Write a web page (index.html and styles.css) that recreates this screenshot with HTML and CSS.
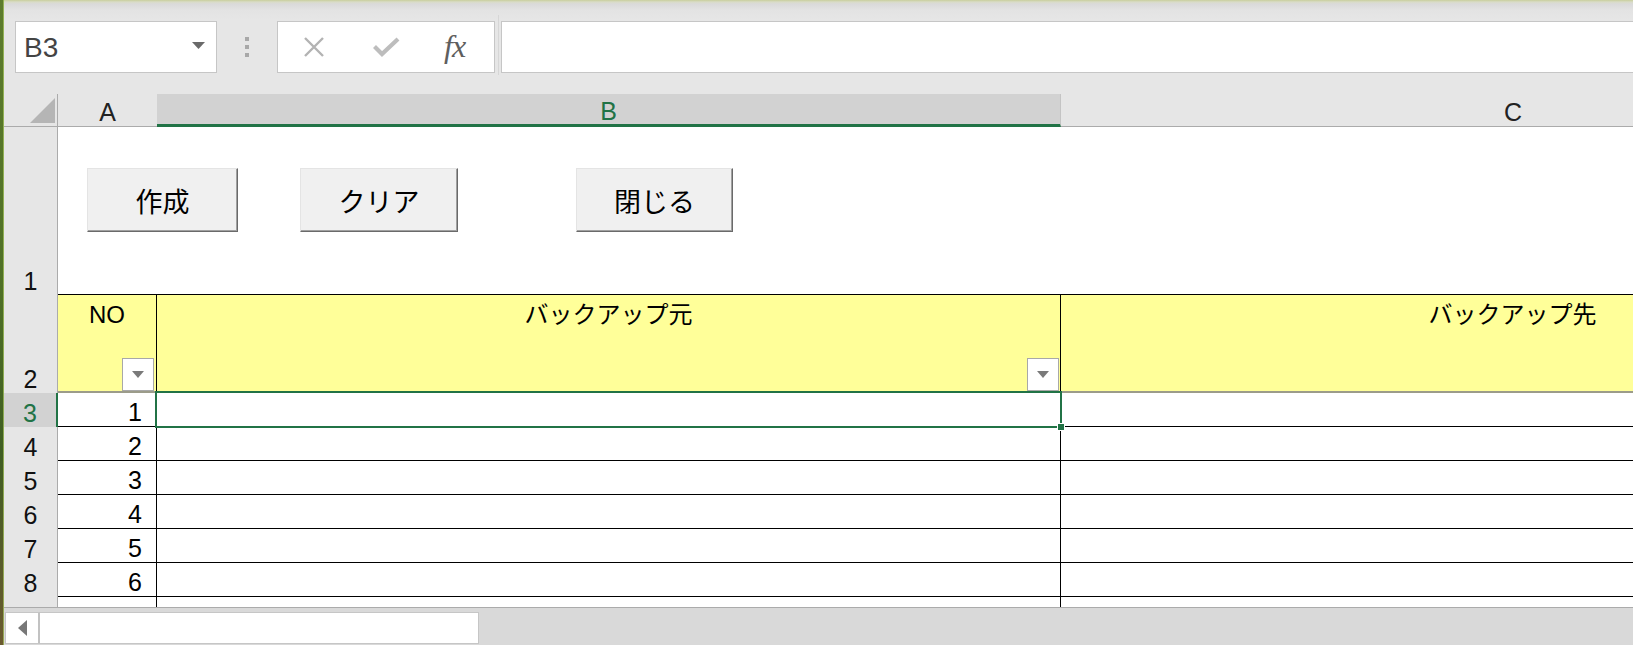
FILE: index.html
```html
<!DOCTYPE html>
<html lang="ja">
<head>
<meta charset="utf-8">
<title>Excel</title>
<link rel="stylesheet" href="styles.css">
</head>
<body>
<div class="screen">
  <div class="desk"></div>
  <div class="excel">
    <div class="fbar">
      <div class="namebox">
        <span class="nb-text">B3</span>
        <svg class="nb-arrow" width="13" height="7" viewBox="0 0 13 7"><polygon points="0,0 13,0 6.5,7" fill="#6a6a6a"/></svg>
      </div>
      <div class="grip">
        <span class="dot"></span><span class="dot"></span><span class="dot"></span>
      </div>
      <div class="fbtns">
        <svg class="ico-x" width="22" height="20" viewBox="0 0 22 20"><path d="M2 1 L20 19 M20 1 L2 19" stroke="#b3b3b3" stroke-width="2.4" fill="none"/></svg>
        <svg class="ico-ok" width="27" height="20" viewBox="0 0 27 20"><path d="M1.5 9.5 L9 17 L25 2" stroke="#bdbdbd" stroke-width="4.2" fill="none" stroke-linejoin="miter"/></svg>
        <span class="fx">fx</span>
      </div>
      <div class="splitter"></div>
      <div class="finput"></div>
    </div>

    <div class="sheet">
      <div class="corner">
        <svg width="54" height="33" viewBox="0 0 54 33"><polygon points="51,4 51,29 26,29" fill="#b5b5b5"/></svg>
      </div>
      <div class="ch">A</div>
      <div class="ch ch-sel">B</div>
      <div class="ch ch-last">C</div>

      <div class="rh">1</div>
      <div class="r1">
        <button class="btn btn-make">作成</button>
        <button class="btn btn-clear">クリア</button>
        <button class="btn btn-close">閉じる</button>
      </div>

      <div class="rh">2</div>
      <div class="hd hd-a">NO<span class="filter"><svg width="12" height="7" viewBox="0 0 12 7"><polygon points="0,0 12,0 6,7" fill="#7a7a7a"/></svg></span></div>
      <div class="hd">バックアップ元<span class="filter"><svg width="12" height="7" viewBox="0 0 12 7"><polygon points="0,0 12,0 6,7" fill="#7a7a7a"/></svg></span></div>
      <div class="hd">バックアップ先</div>

      <div class="rh rh-sel">3</div>
      <div class="c num">1</div>
      <div class="c cur"><span class="sel"></span><span class="handle"></span></div>
      <div class="c"></div>

      <div class="rh">4</div>
      <div class="c num">2</div>
      <div class="c"></div>
      <div class="c"></div>

      <div class="rh">5</div>
      <div class="c num">3</div>
      <div class="c"></div>
      <div class="c"></div>

      <div class="rh">6</div>
      <div class="c num">4</div>
      <div class="c"></div>
      <div class="c"></div>

      <div class="rh">7</div>
      <div class="c num">5</div>
      <div class="c"></div>
      <div class="c"></div>

      <div class="rh">8</div>
      <div class="c num">6</div>
      <div class="c"></div>
      <div class="c"></div>

      <div class="rh">9</div>
      <div class="c num">7</div>
      <div class="c"></div>
      <div class="c"></div>
    </div>

    <div class="hscroll">
      <div class="sb-left"><svg width="9" height="16" viewBox="0 0 9 16"><polygon points="9,0 9,16 0,8" fill="#777"/></svg></div>
      <div class="sb-track"></div>
    </div>
  </div>
</div>
</body>
</html>
```

FILE: styles.css
```css
* { box-sizing: border-box; }

html, body {
  margin: 0;
  padding: 0;
  width: 1633px;
  height: 645px;
  overflow: hidden;
  background: #e6e6e6;
  font-family: "Liberation Sans", "Noto Sans CJK JP", sans-serif;
}

.screen {
  display: flex;
  width: 1633px;
  height: 645px;
}

.desk {
  width: 4px;
  flex: none;
  background:
    linear-gradient(to right, transparent 0 3px, rgba(170, 200, 100, 0.7) 3px 4px),
    linear-gradient(to bottom, #5d7c2d 0%, #4f7026 45%, #3f5e22 70%, #6b5a30 100%);
}

.excel {
  flex: 1;
  min-width: 0;
  display: flex;
  flex-direction: column;
  overflow: hidden;
}

/* formula bar */
.fbar {
  height: 94px;
  flex: none;
  display: flex;
  align-items: flex-start;
  padding-top: 21px;
  background: linear-gradient(to bottom, #c8ce9c 0, #d9dcc8 2px, #dadada 4px, #e3e3e3 10px, #e6e6e6 20px);
}

.namebox {
  margin-left: 11px;
  width: 202px;
  height: 52px;
  background: #fff;
  border: 1px solid #c6c6c6;
  display: flex;
  align-items: center;
  padding-left: 8px;
  position: relative;
}

.nb-text {
  font-size: 28px;
  color: #444;
  line-height: 1;
  margin-top: 1px;
}

.nb-arrow {
  margin-left: auto;
  margin-right: 11px;
  margin-top: -4px;
}

.grip {
  width: 60px;
  height: 52px;
  display: flex;
  flex-direction: column;
  align-items: center;
  justify-content: center;
  gap: 4px;
}

.dot {
  width: 4px;
  height: 4px;
  background: #a8a8a8;
}

.fbtns {
  width: 218px;
  height: 52px;
  background: #fff;
  border: 1px solid #c6c6c6;
  display: flex;
  align-items: center;
}

.ico-x { margin-left: 25px; }
.ico-ok { margin-left: 48px; }

.fx {
  margin-left: 44px;
  font-family: "Liberation Serif", serif;
  font-style: italic;
  font-size: 32px;
  color: #5e5e5e;
  line-height: 1;
  margin-top: -3px;
  letter-spacing: -1px;
}

.splitter {
  width: 6px;
  height: 60px;
  margin-top: -6px;
  display: flex;
  justify-content: center;
}

.splitter::before {
  content: "";
  width: 1px;
  height: 100%;
  background: #d6d6d6;
}

.finput {
  flex: 1;
  height: 52px;
  margin-right: -4px;
  background: #fff;
  border: 1px solid #c6c6c6;
}

/* sheet grid */
.sheet {
  height: 513px;
  flex: none;
  overflow: hidden;
  display: grid;
  grid-template-columns: 54px 99px 904px 904px;
  grid-template-rows: 33px 168px 98px repeat(7, 34px);
  background: #fff;
}

.corner {
  background: #e6e6e6;
  border-right: 1px solid #ababab;
  border-bottom: 1px solid #ababab;
}

.corner svg { display: block; }

.ch {
  background: #e6e6e6;
  border-bottom: 1px solid #ababab;
  display: flex;
  justify-content: center;
  align-items: flex-end;
  font-size: 25px;
  line-height: 25px;
  color: #222;
  padding-bottom: 1px;
}

.ch-sel {
  background: #d2d2d2;
  color: #217346;
  border-bottom: 3px solid #217346;
  border-right: 1px solid #c4c4c4;
  padding-bottom: 0;
}

.rh {
  background: #e6e6e6;
  border-right: 1px solid #ababab;
  display: flex;
  justify-content: center;
  align-items: flex-end;
  font-size: 25px;
  line-height: 25px;
  color: #111;
  padding-bottom: 1px;
}

.rh-sel {
  background: #d2d2d2;
  color: #217346;
  border-right: 2px solid #217346;
}

.r1 {
  grid-column: 2 / 5;
  background: #fff;
  border-bottom: 1px solid #000;
  display: flex;
  align-items: flex-start;
  padding-top: 41px;
  padding-left: 29px;
}

.btn {
  height: 64px;
  padding: 0;
  background: #f0f0f0;
  border-top: 1px solid #e4e4e4;
  border-left: 1px solid #e4e4e4;
  border-right: 1px solid #6a6a6a;
  border-bottom: 1px solid #6a6a6a;
  box-shadow: inset -1px -1px 0 #a0a0a0;
  font-family: "Noto Sans CJK JP", sans-serif;
  font-size: 27px;
  line-height: 1;
  color: #000;
}

.btn-make { width: 151px; }
.btn-clear { width: 158px; margin-left: 62px; }
.btn-close { width: 157px; margin-left: 118px; }

.hd {
  position: relative;
  background: #ffff99;
  border-right: 1px solid #000;
  border-bottom: 2px solid #9c9c8a;
  text-align: center;
  font-size: 24px;
  line-height: 28px;
  padding-top: 6px;
  color: #000;
}

.filter {
  position: absolute;
  right: 1px;
  bottom: 0;
  width: 32px;
  height: 33px;
  background: #fff;
  border: 1px solid #a8a8a8;
  display: flex;
  align-items: center;
  justify-content: center;
}

.hd-a .filter { right: 2px; }

.c {
  position: relative;
  background: #fff;
  border-right: 1px solid #000;
  border-bottom: 1px solid #000;
}

.cur { z-index: 3; }

.num {
  display: flex;
  justify-content: flex-end;
  align-items: flex-end;
  font-size: 25px;
  line-height: 25px;
  padding-right: 14px;
  padding-bottom: 1px;
  color: #000;
}

.sel {
  position: absolute;
  left: -2px;
  top: -2px;
  right: -2px;
  bottom: -2px;
  border: 2px solid #217346;
}

.handle {
  position: absolute;
  right: -5px;
  bottom: -5px;
  width: 8px;
  height: 8px;
  background: #217346;
  border: 1px solid #fff;
}

/* horizontal scroll */
.hscroll {
  flex: 1;
  background: #d9d9d9;
  border-top: 1px solid #ababab;
  display: flex;
  align-items: flex-start;
  padding-top: 4px;
  padding-left: 1px;
}

.sb-left {
  width: 35px;
  height: 32px;
  background: #fff;
  border: 1px solid #c6c6c6;
  border-right: 2px solid #c2c2c2;
  display: flex;
  align-items: center;
  justify-content: center;
}

.sb-track {
  width: 439px;
  height: 32px;
  background: #fff;
  border: 1px solid #c6c6c6;
  border-left: none;
}
```
